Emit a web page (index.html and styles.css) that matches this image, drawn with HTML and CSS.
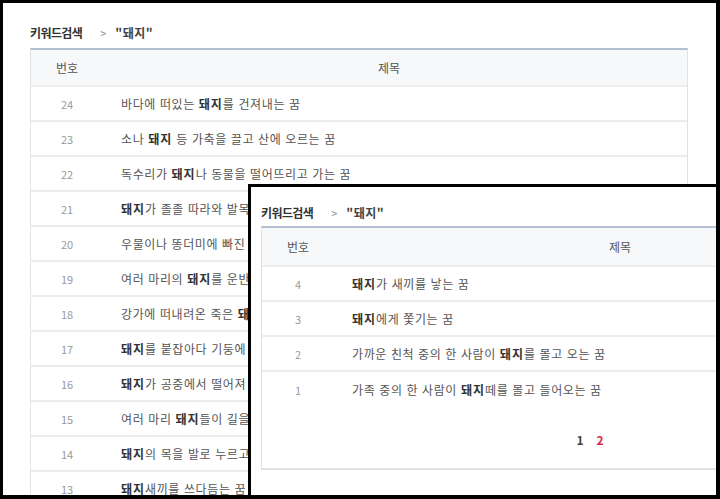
FILE: index.html
```html
<!DOCTYPE html>
<html lang="ko">
<head>
<meta charset="utf-8">
<link rel="stylesheet" href="styles.css">
</head>
<body>
<div class="frame">
  <div class="page">
    <div class="crumb"><span class="crumb-main">키워드검색</span><span class="crumb-sep">&gt;</span><span class="crumb-key">"돼지"</span></div>
    <div class="board">
      <div class="row head"><div class="num">번호</div><div class="subj">제목</div></div>
      <div class="row"><div class="num">24</div><div class="subj">바다에 떠있는 <b>돼지</b>를 건져내는 꿈</div></div>
      <div class="row"><div class="num">23</div><div class="subj">소나 <b>돼지</b> 등 가축을 끌고 산에 오르는 꿈</div></div>
      <div class="row"><div class="num">22</div><div class="subj">독수리가 <b>돼지</b>나 동물을 떨어뜨리고 가는 꿈</div></div>
      <div class="row"><div class="num">21</div><div class="subj"><b>돼지</b>가 졸졸 따라와 발목을 무는 꿈</div></div>
      <div class="row"><div class="num">20</div><div class="subj">우물이나 똥더미에 빠진 <b>돼지</b>를 구하는 꿈</div></div>
      <div class="row"><div class="num">19</div><div class="subj">여러 마리의 <b>돼지</b>를 운반하는 꿈</div></div>
      <div class="row"><div class="num">18</div><div class="subj">강가에 떠내려온 죽은 <b>돼지</b>를 건지는 꿈</div></div>
      <div class="row"><div class="num">17</div><div class="subj"><b>돼지</b>를 붙잡아다 기둥에 매는 꿈</div></div>
      <div class="row"><div class="num">16</div><div class="subj"><b>돼지</b>가 공중에서 떨어져 내리는 꿈</div></div>
      <div class="row"><div class="num">15</div><div class="subj">여러 마리 <b>돼지</b>들이 길을 막는 꿈</div></div>
      <div class="row"><div class="num">14</div><div class="subj"><b>돼지</b>의 목을 발로 누르고 있는 꿈</div></div>
      <div class="row"><div class="num">13</div><div class="subj"><b>돼지</b>새끼를 쓰다듬는 꿈</div></div>
    </div>
  </div>
  <div class="popup">
    <div class="crumb"><span class="crumb-main">키워드검색</span><span class="crumb-sep">&gt;</span><span class="crumb-key">"돼지"</span></div>
    <div class="board board-end">
      <div class="row head"><div class="num">번호</div><div class="subj">제목</div></div>
      <div class="row"><div class="num">4</div><div class="subj"><b>돼지</b>가 새끼를 낳는 꿈</div></div>
      <div class="row"><div class="num">3</div><div class="subj"><b>돼지</b>에게 쫓기는 꿈</div></div>
      <div class="row"><div class="num">2</div><div class="subj">가까운 친척 중의 한 사람이 <b>돼지</b>를 몰고 오는 꿈</div></div>
      <div class="row last"><div class="num">1</div><div class="subj">가족 중의 한 사람이 <b>돼지</b>떼를 몰고 들어오는 꿈</div></div>
      <div class="pager"><span class="pg">1</span><span class="pg cur">2</span></div>
    </div>
  </div>
</div>
</body>
</html>
```

FILE: styles.css
```css
html, body {
  margin: 0;
  padding: 0;
  background: #000;
}
body {
  width: 720px;
  height: 499px;
  overflow: hidden;
  font-family: "Noto Sans CJK KR", "Noto Sans", sans-serif;
}
.frame {
  position: relative;
  margin: 3px 0 0 3px;
  width: 713px;
  height: 492px;
  background: #fff;
  overflow: hidden;
}
.page {
  padding: 22px 0 0 27px;
}
.crumb {
  display: flex;
  align-items: center;
  height: 16px;
  margin-bottom: 7px;
  font-size: 12px;
  line-height: 16px;
  color: #333;
}
.crumb-main {
  font-weight: bold;
  letter-spacing: -0.6px;
}
.crumb-sep {
  margin-left: 18px;
  color: #888;
  font-size: 11px;
}
.crumb-key {
  margin-left: 9px;
  font-weight: bold;
  color: #444;
  letter-spacing: 0.5px;
}
.board {
  width: 656px;
  border-left: 1px solid #e2e2e2;
  border-right: 1px solid #e2e2e2;
  border-top: 2px solid #b3bfd3;
}
.row {
  display: flex;
  align-items: center;
  height: 33px;
  border-bottom: 2px solid #ededed;
}
.row.head {
  height: 35px;
  background: #f7f8fa;
}
.popup .row.head {
  height: 37px;
}
.row.last {
  border-bottom: none;
  height: 35px;
}
.num {
  width: 72px;
  flex: none;
  text-align: center;
  font-size: 11px;
  color: #999;
}
.head .num,
.head .subj {
  font-size: 12px;
  color: #555;
}
.subj {
  flex: 1;
  padding-left: 18px;
  font-size: 12px;
  color: #555;
  white-space: nowrap;
  letter-spacing: 0.6px;
}
.head .subj {
  padding-left: 0;
  padding-right: 12px;
  text-align: center;
  letter-spacing: 0;
}
.subj b {
  color: #333;
  font-weight: bold;
  letter-spacing: 1px;
}
.popup {
  position: absolute;
  left: 245px;
  top: 181px;
  right: 0;
  bottom: 0;
  background: #fff;
  border-left: 3px solid #000;
  border-top: 3px solid #000;
  padding: 18px 0 0 10px;
}
.popup .crumb {
  margin-bottom: 5px;
}
.board-end {
  border-bottom: 2px solid #e2e2e2;
}
.pager {
  display: flex;
  justify-content: center;
  gap: 13px;
  height: 61px;
  padding-top: 25px;
  box-sizing: border-box;
  font-size: 12px;
  font-weight: bold;
  line-height: 16px;
  color: #444;
}
.pg.cur {
  color: #e2264a;
}
```
